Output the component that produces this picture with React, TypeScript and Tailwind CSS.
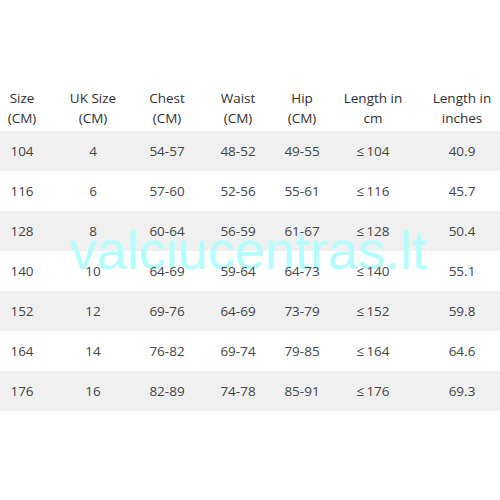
const cols = "grid grid-cols-[44px_98px_50px_92px_36px_106px_72px]";

const rows: string[][] = [
  ["104", "4", "54-57", "48-52", "49-55", "≤\u2009104", "40.9"],
  ["116", "6", "57-60", "52-56", "55-61", "≤\u2009116", "45.7"],
  ["128", "8", "60-64", "56-59", "61-67", "≤\u2009128", "50.4"],
  ["140", "10", "64-69", "59-64", "64-73", "≤\u2009140", "55.1"],
  ["152", "12", "69-76", "64-69", "73-79", "≤\u2009152", "59.8"],
  ["164", "14", "76-82", "69-74", "79-85", "≤\u2009164", "64.6"],
  ["176", "16", "82-89", "74-78", "85-91", "≤\u2009176", "69.3"],
];

const headers: [string, string][] = [
  ["Size", "(CM)"],
  ["UK Size", "(CM)"],
  ["Chest", "(CM)"],
  ["Waist", "(CM)"],
  ["Hip", "(CM)"],
  ["Length in", "cm"],
  ["Length in", "inches"],
];

export default function App() {
  return (
    <div className="relative w-[500px] h-[500px] bg-white pt-[85px] font-['Open_Sans',sans-serif] text-[13.5px]">
      <div className={`${cols} py-[3px] leading-[20px] text-[#2e2e2e] font-medium`}>
        {headers.map(([a, b], i) => (
          <div key={i} className="flex flex-col items-center whitespace-nowrap">
            <span>{a}</span>
            <span>{b}</span>
          </div>
        ))}
      </div>
      {rows.map((r, i) => (
        <div
          key={i}
          className={`${cols} h-10 items-center text-[#444] ${i % 2 === 0 ? "bg-[#f0f0f0]" : "bg-white"}`}
        >
          {r.map((c, j) => (
            <div key={j} className="relative z-10 text-center whitespace-nowrap">
              {c}
            </div>
          ))}
        </div>
      ))}
      <div className="absolute left-[70px] top-[223px] text-[54px] leading-none text-[#b3fdfd] font-['Liberation_Sans',sans-serif] pointer-events-none">
        valciucentras.lt
      </div>
    </div>
  );
}
